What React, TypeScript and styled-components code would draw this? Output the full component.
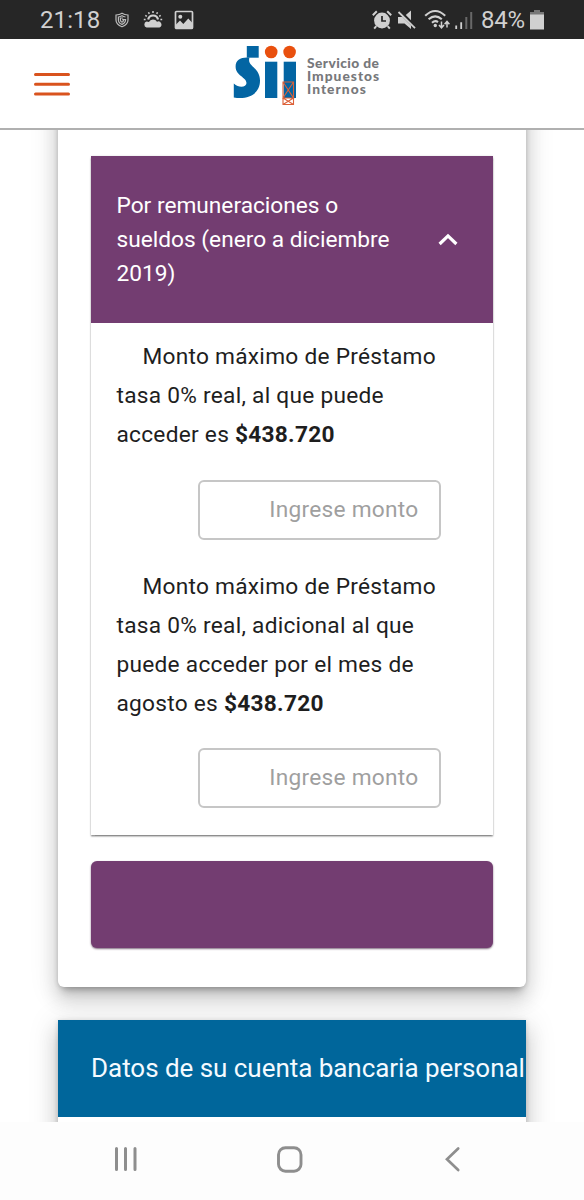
import React from 'react';
import styled, { createGlobalStyle } from 'styled-components';

const GlobalStyle = createGlobalStyle`
  * { box-sizing: border-box; }
  body { margin: 0; background: #fff; font-family: Roboto, sans-serif; }
`;

const Screen = styled.div`
  width: 584px;
  height: 1200px;
  display: flex;
  flex-direction: column;
  overflow: hidden;
  background: #fff;
`;

const StatusBar = styled.div`
  flex: none;
  height: 39px;
  padding: 0 40px 0 40px;
  display: flex;
  align-items: center;
  justify-content: space-between;
  background: #262626;
  color: #d0d0d0;
`;

const StatusGroup = styled.div`
  display: flex;
  align-items: center;
  height: 39px;
`;

const StatusText = styled.span<{ $spacing: number; $left?: number }>`
  font-size: 24px;
  line-height: 39px;
  padding-top: 2px;
  margin-left: ${(p) => p.$left ?? 0}px;
  letter-spacing: ${(p) => p.$spacing}px;
`;

const StatusIcon = styled.svg<{ $left: number }>`
  display: block;
  flex: none;
  margin-left: ${(p) => p.$left}px;
`;

const Header = styled.header`
  flex: none;
  height: 91px;
  padding-left: 34px;
  display: flex;
  align-items: flex-start;
  border-bottom: 2px solid #b0b0b0;
  background: #fff;
`;

const MenuButton = styled.button`
  margin: 33px 0 0;
  padding: 0;
  width: 36px;
  height: 25px;
  border: 0;
  background: none;
  svg { display: block; }
`;

const Brand = styled.div`
  display: flex;
  margin-left: 163px;
`;

const BrandLogo = styled.svg`
  display: block;
  margin-top: 4px;
`;

const BrandName = styled.div`
  margin: 17px 0 0 8px;
  font-family: Lato, sans-serif;
  font-weight: 900;
  font-size: 13.8px;
  line-height: 13px;
  color: #77787b;
`;

const BrandLine = styled.div<{ $spacing: number }>`
  letter-spacing: ${(p) => p.$spacing}px;
  white-space: nowrap;
`;

const Content = styled.main`
  flex: none;
  height: 992px;
  padding: 0 58px;
  overflow: hidden;
`;

const cardShadow = `0 9px 9px -5px rgba(0,0,0,.22), 0 13px 18px 1.6px rgba(0,0,0,.12), 0 5px 27px 4px rgba(0,0,0,.1), 0 1px 5px rgba(0,0,0,.16)`;

const Card = styled.section`
  width: 467.5px;
  height: 888px;
  margin-top: -31px;
  padding: 57px 32.5px 0;
  background: #fff;
  border-radius: 6px;
  box-shadow: ${cardShadow};
`;

const Accordion = styled.div`
  height: 679px;
  background: #fff;
  box-shadow: 0 1.6px 1.6px rgba(0, 0, 0, 0.42), 0 0 2px rgba(0, 0, 0, 0.12);
`;

const AccordionHeader = styled.div`
  height: 167px;
  padding: 33px 35.5px 0 26px;
  display: flex;
  justify-content: space-between;
  background: #733d71;
  color: #fff;
  font-size: 22.7px;
  line-height: 34px;
`;

const AccordionTitle = styled.div`
  width: 290px;
`;

const Chevron = styled.svg`
  display: block;
  margin-top: 44px;
`;

const Field = styled.div<{ $height: number }>`
  height: ${(p) => p.$height}px;
  padding: 14px 52px 0 26px;
`;

const FieldText = styled.p`
  margin: 0;
  width: 330px;
  text-indent: 26px;
  color: #1e1e1e;
  font-size: 22.7px;
  line-height: 39px;
  letter-spacing: 0.26px;
`;

const Amount = styled.b`
  font-weight: 700;
`;

const AmountInput = styled.input<{ $gap: number }>`
  display: block;
  width: 243px;
  height: 60px;
  margin: ${(p) => p.$gap}px 0 0 auto;
  padding: 0 20.500px 2px 20px;
  border: 2px solid #c6c6c6;
  border-radius: 6px;
  background: #fff;
  text-align: right;
  font-family: Roboto, sans-serif;
  font-size: 22.7px;
  letter-spacing: 0.26px;
  &::placeholder { color: #9f9f9f; opacity: 1; }
`;

const ActionButton = styled.button`
  display: block;
  width: 100%;
  height: 87px;
  margin-top: 26px;
  border: 0;
  border-radius: 6px;
  background: #733d71;
  box-shadow: 0 1px 2px rgba(60, 30, 60, 0.65);
`;

const BankCard = styled.section`
  width: 467.5px;
  height: 200px;
  margin-top: 32.5px;
  background: #fff;
  box-shadow: ${cardShadow};
`;

const BankTitle = styled.h2`
  margin: 0;
  height: 97px;
  padding-left: 33px;
  overflow: hidden;
  background: #00669b;
  color: #f4faff;
  font-weight: 400;
  font-size: 26px;
  letter-spacing: -0.04px;
  line-height: 97px;
  white-space: nowrap;
`;

const NavBar = styled.nav`
  flex: 1;
  padding: 24px 123px 0 113px;
  display: flex;
  justify-content: space-between;
  background: #fdfdfd;
`;

const Logo = () => (
  <BrandLogo width="66" height="62" viewBox="233 43 66 62">
    <g fill="#0365a3">
      <path d="M246.800 46H258.700V57.700H246.800Z" />
      <path d="M249.500 57.500C246.500 66.500 260 67 260 80.500C260 94 248 100 233.800 97.500V83.500C239 88.500 246.500 87.300 246.500 83C246.500 77 235.600 76 235.600 66.500C235.600 60.500 240 57.500 247 57.500Z" />
      <path d="M265 61.700H277.300V98H265Z" />
      <path d="M283.700 61.700H296V98H283.700Z" />
    </g>
    <g fill="#e9500e">
      <circle cx="271.200" cy="52" r="6.300" />
      <circle cx="289.600" cy="52" r="6.300" />
    </g>
    <path d="M283 82H293.500V104.500H283ZM283 82L293.500 98H283L293.500 82M283 98L293.500 104.500M293.500 98L283 104.500" fill="none" stroke="#dc6038" strokeWidth="1.100" />
  </BrandLogo>
);

const amountFields = [
  { text: 'Monto máximo de Préstamo tasa 0% real, al que puede acceder es ', height: 230, gap: 26 },
  { text: 'Monto máximo de Préstamo tasa 0% real, adicional al que puede acceder por el mes de agosto es ', height: 282, gap: 25 },
];

export default function App() {
  return (
    <>
      <GlobalStyle />
      <Screen>
        <StatusBar>
          <StatusGroup>
            <StatusText $spacing={0.1}>21:18</StatusText>
            <StatusIcon $left={14} width="16" height="16" viewBox="0 0 16 16" fill="none" stroke="#bcbcbc" strokeWidth="1.200">
              <path d="M2 3Q5.500 2.800 8 1.200Q10.500 2.800 14 3V8Q14 12.500 8 14.800Q2 12.500 2 8Z" />
              <path d="M11.500 5Q9.500 4.800 8 3.800Q6.300 4.800 4.400 5V8Q4.400 11 8 12.400Q11.600 11 11.600 7.600H8.200M9.200 6H6.400V8Q6.600 9.600 8 10.200Q9.400 9.600 9.600 8" />
            </StatusIcon>
            <StatusIcon $left={13} width="20" height="20" viewBox="0 0 20 20">
              <path d="M3.500 17.500A3.200 3.200 0 0 1 3.600 11.400Q5 11.400 5.900 12A4.600 4.600 0 0 1 14 11.700A3 3 0 0 1 16.500 17.500Z" fill="#d0d0d0" />
              <path d="M5.200 9.500A5 5 0 0 1 15 9.500" fill="none" stroke="#d0d0d0" strokeWidth="2.200" />
              <path d="M10 1V3M5.500 2.200L6.300 3.900M14.500 2.200L13.700 3.900M2.300 5.300L3.800 6.300M17.700 5.300L16.200 6.300M.8 9.500H2.600M19.200 9.500H17.400" stroke="#d0d0d0" strokeWidth="1.500" />
            </StatusIcon>
            <StatusIcon $left={11} width="20" height="20" viewBox="0 0 20 20">
              <rect x="1.500" y="1.500" width="17" height="17" rx="1" fill="none" stroke="#d0d0d0" strokeWidth="1.700" />
              <circle cx="6.300" cy="6.700" r="2" fill="#d0d0d0" />
              <path d="M2 18V14.500L6 10.500L9.300 14L14.300 8.500L18 12.500V18Z" fill="#d0d0d0" />
            </StatusIcon>
          </StatusGroup>
          <StatusGroup>
            <StatusIcon $left={0} width="20" height="20" viewBox="0 0 20 20">
              <circle cx="10" cy="10.500" r="7.900" fill="#d0d0d0" />
              <path d="M10 6V11H14" fill="none" stroke="#262626" strokeWidth="1.700" />
              <path d="M.8 5.300L4.800 1.300M19.200 5.300L15.200 1.300M4.300 16.200L2.200 18.600M15.700 16.200L17.800 18.600" stroke="#d0d0d0" strokeWidth="2" />
            </StatusIcon>
            <StatusIcon $left={5} width="20" height="20" viewBox="0 0 20 20">
              <path d="M1 7H5.500L14 15.500V19L7.500 13.600H1ZM8.800 5L14 .6V10.200Z" fill="#d0d0d0" />
              <path d="M1.500 2L18 18.200" stroke="#d0d0d0" strokeWidth="1.800" />
            </StatusIcon>
            <StatusIcon $left={7} width="27" height="21" viewBox="0 0 27 21" fill="none" stroke="#d0d0d0">
              <path d="M1.200 6.800Q11.200-2.800 21.200 6.800M4.600 10.300Q11.200 4.300 17.800 10.300M8 13.700Q11.200 11 14 13.100" strokeWidth="2.100" />
              <circle cx="11.300" cy="16.500" r="1.700" fill="#d0d0d0" stroke="none" />
              <path d="M17.500 12.600V18.500M15 16L17.500 18.800L20 16M23 18.600V13M20.600 15.300L23 12.500L25.400 15.300" strokeWidth="1.500" />
            </StatusIcon>
            <StatusIcon $left={4} width="18" height="20" viewBox="0 0 18 20">
              <path d="M.3 15.500H2.100V19H.3ZM5.300 12.300H7.100V19H5.300Z" fill="#d0d0d0" />
              <path d="M10.300 7H12.300V19H10.300ZM15.200 2H17.200V19H15.200Z" fill="#686868" />
            </StatusIcon>
            <StatusText $spacing={-0.2} $left={8}>84%</StatusText>
            <StatusIcon $left={5} width="14" height="20" viewBox="0 0 14 20">
              <path d="M4 0H10V2H14V5H0V2H4Z" fill="#777" />
              <path d="M0 4.500H14V19.500H0Z" fill="#d0d0d0" />
            </StatusIcon>
          </StatusGroup>
        </StatusBar>
        <Header>
          <MenuButton aria-label="Menú">
            <svg width="36" height="25" viewBox="0 0 36 25">
              <path d="M1.500 2.500H34.500M1.500 12.300H34.500M1.500 22H34.500" stroke="#d9531e" strokeWidth="3" strokeLinecap="round" />
            </svg>
          </MenuButton>
          <Brand>
            <Logo />
            <BrandName>
              <BrandLine $spacing={0.4}>Servicio de</BrandLine>
              <BrandLine $spacing={1}>Impuestos</BrandLine>
              <BrandLine $spacing={1.05}>Internos</BrandLine>
            </BrandName>
          </Brand>
        </Header>
        <Content>
          <Card>
            <Accordion>
              <AccordionHeader>
                <AccordionTitle>Por remuneraciones o sueldos (enero a diciembre 2019)</AccordionTitle>
                <Chevron width="20" height="13" viewBox="0 0 20 13">
                  <path d="M1.600 11L10 2.900L18.400 11" fill="none" stroke="#fff" strokeWidth="3.200" />
                </Chevron>
              </AccordionHeader>
              {amountFields.map((f) => (
                <Field key={f.height} $height={f.height}>
                  <FieldText>{f.text}<Amount>$438.720</Amount></FieldText>
                  <AmountInput $gap={f.gap} placeholder="Ingrese monto" />
                </Field>
              ))}
            </Accordion>
            <ActionButton aria-label="Continuar" />
          </Card>
          <BankCard>
            <BankTitle>Datos de su cuenta bancaria personal</BankTitle>
          </BankCard>
        </Content>
        <NavBar>
          <svg width="26" height="26" viewBox="0 0 26 26">
            <path d="M3.500 2.500V23.500M12.500 2.500V23.500M22 2.500V23.500" stroke="#8e8e8e" strokeWidth="3" strokeLinecap="round" />
          </svg>
          <svg width="28" height="28" viewBox="0 0 28 28">
            <rect x="1.500" y="1.700" width="22.500" height="23.500" rx="7" fill="none" stroke="#8e8e8e" strokeWidth="2.900" />
          </svg>
          <svg width="18" height="26" viewBox="0 0 18 26">
            <path d="M15.200 2.500L4 13.300L15.200 24" fill="none" stroke="#8e8e8e" strokeWidth="2.700" strokeLinecap="round" />
          </svg>
        </NavBar>
      </Screen>
    </>
  );
}
